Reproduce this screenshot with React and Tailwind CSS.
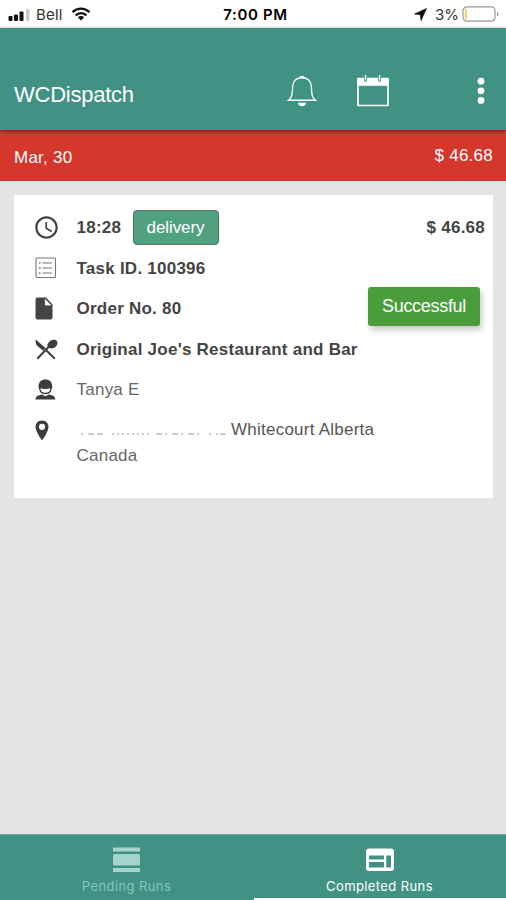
import React from 'react';
import { MdAccessTime } from 'react-icons/md';

const StatusBar = () => (
  <div className="flex h-7 bg-white text-black font-['Inter',sans-serif]">
    <div className="flex-1 flex items-center pl-2 pt-px">
      <svg width="23" height="14" viewBox="0 0 23 14">
        <rect x="0.5" y="8" width="4" height="5" rx="1" fill="#111" />
        <rect x="6" y="6.500" width="4" height="6.500" rx="1" fill="#111" />
        <rect x="11.500" y="3.500" width="4" height="9.500" rx="1" fill="#111" />
        <rect x="18" y="1" width="3.500" height="12" rx="1" fill="#c9c9c9" />
      </svg>
      <span className="ml-[5px] pt-px text-[15px] tracking-[0.2px] text-[#333]">Bell</span>
      <svg className="ml-2 -mt-px" width="20" height="14" viewBox="0 0 20 14" fill="none" stroke="#111" strokeWidth="2.400">
        <path d="M1.500 5.200C6.500 0.400 13.500 0.400 18.500 5.200" />
        <path d="M4.600 8.400C7.800 5.400 12.200 5.400 15.400 8.400" />
        <path d="M10 13.500L6.800 10.300C8.600 8.700 11.400 8.700 13.200 10.300Z" fill="#111" stroke="none" />
      </svg>
    </div>
    <div className="flex items-center text-[15px] font-semibold tracking-[0.65px] pt-[2px] pl-[3px]">7:00 PM</div>
    <div className="flex-1 flex items-center justify-end pr-[6px]">
      <svg width="13" height="13" viewBox="0 0 13 13">
        <path d="M12.500 0.500L7 12.500L6.300 6.700L0.500 6Z" fill="#111" stroke="#111" strokeWidth="0.700" />
      </svg>
      <span className="ml-2 pt-[2px] text-[15px] text-[#333]">3%</span>
      <svg className="ml-[3px]" width="38" height="16" viewBox="0 0 38 16">
        <rect x="1" y="0.800" width="32" height="14.400" rx="4" fill="#fff" stroke="#999" strokeWidth="1.200" />
        <rect x="2.800" y="3" width="2" height="10" rx="1" fill="#f5cf5b" />
        <path d="M35 6C37 6.500 37 9.500 35 10Z" fill="#999" />
      </svg>
    </div>
  </div>
);

const Header = () => (
  <header className="relative z-10 flex items-center h-[102px] pt-[25px] pl-[14px] pr-[21px] bg-[#419285] text-white shadow-[0_1px_4px_rgba(0,0,0,0.55)]">
    <h1 className="flex-1 pt-[6px] text-[22px] tracking-[-0.25px]">WCDispatch</h1>
    <svg className="-mt-[2px] mr-[40px]" width="30" height="32" viewBox="0 0 30 32" fill="none" stroke="#fff" strokeWidth="1.400">
      <path d="M1.500 25.300C4 23.500 5 21 5.300 17L5.700 11C6 6 9.500 2.800 15 2.800S24 6 24.300 11L24.700 17C25 21 26 23.500 28.500 25.300Z" />
      <path d="M12.300 2.700C12.500 0 17.500 0 17.700 2.700Z" fill="#fff" stroke="none" />
      <path d="M10.800 27.800H19.200C18.500 32.300 11.500 32.300 10.800 27.800Z" fill="#fff" stroke="none" />
    </svg>
    <svg className="-mt-[2px] mr-[88px]" width="32" height="32" viewBox="0 0 32 32">
      <path d="M1 3.500H31V30.500H1Z" fill="none" stroke="#fff" strokeWidth="1.700" />
      <path d="M0.500 3H31.500V10.800H0.500Z" fill="#fff" />
      <path d="M8.500 3V6.500M22.500 3V6.500" stroke="#419285" strokeWidth="2.800" />
      <path d="M8.500 0V5.500M22.500 0V5.500" stroke="#fff" strokeWidth="1.300" />
    </svg>
    <svg className="-mt-[2px]" width="8" height="28" viewBox="0 0 8 28" fill="#fff">
      <circle cx="4" cy="4.200" r="3.400" />
      <circle cx="4" cy="13.800" r="3.400" />
      <circle cx="4" cy="23.400" r="3.400" />
    </svg>
  </header>
);

const ListIcon = () => (
  <svg width="22" height="22" viewBox="0 0 22 22" fill="none" stroke="#777">
    <rect x="1" y="1" width="19.500" height="19.500" rx="1" strokeWidth="1.100" />
    <path d="M7.500 6H17M7.500 11H17M7.500 16H17" strokeWidth="1.200" />
    <path d="M4 6H5.600M4 11H5.600M4 16H5.600" strokeWidth="1.600" />
  </svg>
);

const FileIcon = () => (
  <svg width="18" height="23" viewBox="0 0 18 23">
    <path d="M2.500 0.500H11L17.500 7.500V20.500Q17.500 22.500 15.500 22.500H2.500Q0.500 22.500 0.500 20.500V2.500Q0.500 0.500 2.500 0.500Z" fill="#444" />
    <path d="M10.300 2.200V8H16" fill="#fff" stroke="#fff" strokeWidth="0.800" />
  </svg>
);

const CutleryIcon = () => (
  <svg width="23" height="21" viewBox="0 0 23 21" fill="#3d3d3d">
    <path d="M0.800 0.500L10.700 9.200L8.200 11.800L2.500 7C0.800 5.500 0.300 2.800 0.800 0.500Z" />
    <path d="M12.500 5.500C13.500 2.500 16.500 0.300 19.500 0.700C22 1 23 3.200 22.200 5.500C21.300 8.200 18.300 10 15.500 9.200C13.200 8.700 12 7.300 12.500 5.500Z" />
    <path d="M14 7.500L2.300 19.700M10.700 10.800L19.800 19.700" fill="none" stroke="#3d3d3d" strokeWidth="2" />
  </svg>
);

const PersonIcon = () => (
  <svg width="21" height="21" viewBox="0 0 21 21" fill="#3d3d3d">
    <path d="M3.500 8C3.500 2.800 6.300 0.500 10.400 0.500S17.300 2.800 17.300 8L16.300 11.500C15.600 14 13.500 15.300 10.400 15.300S5.200 14 4.500 11.500Z" />
    <path d="M5.300 9.300C8 10.200 12.800 10.200 15.500 9.300C15.200 12.300 13.300 13.800 10.400 13.800S5.600 12.300 5.300 9.300Z" fill="#fff" />
    <path d="M0.500 20.500C0.500 17.500 3 16.300 7 15.600L10.400 17.200L13.800 15.600C17.800 16.300 20.300 17.500 20.300 20.500Z" />
  </svg>
);

const PinIcon = () => (
  <svg width="14" height="21" viewBox="0 0 14 21">
    <path d="M7 0.500C3.200 0.500 0.500 3.300 0.500 7C0.500 11.500 7 20.500 7 20.500S13.500 11.500 13.500 7C13.500 3.300 10.800 0.500 7 0.500Z" fill="#3d3d3d" />
    <circle cx="7" cy="6.800" r="3.100" fill="#fff" />
  </svg>
);

const Row = ({ icon, children }) => (
  <div className="flex items-center h-[40.500px]">
    <div className="w-[41.500px] shrink-0">{icon}</div>
    {children}
  </div>
);

const TaskCard = () => (
  <div className="mt-[14px] ml-[14px] mr-[13px] h-[303px] bg-white pt-[12.500px] pl-[21px] pr-2 text-[17px] tracking-[0.24px] text-[#444]">
    <Row icon={<MdAccessTime className="size-[27px] -ml-[2px] text-[#444]" />}>
      <span className="w-14 font-bold">18:28</span>
      <span className="flex items-center justify-center w-[86px] h-[35px] rounded-[4px] border border-[#5f6f68] bg-[#50a17f] text-white tracking-[-0.1px]">delivery</span>
      <span className="ml-auto font-bold">$ 46.68</span>
    </Row>
    <Row icon={<ListIcon />}>
      <span className="font-bold">Task ID. 100396</span>
    </Row>
    <Row icon={<FileIcon />}>
      <span className="flex-1 font-bold">Order No. 80</span>
      <span className="flex items-center justify-center w-28 h-[39px] mr-[5px] -mt-[5px] rounded-[3px] bg-[#4b9d3b] text-[18px] text-white tracking-[-0.3px] shadow-[2px_4px_6px_rgba(0,0,0,0.22)]">Successful</span>
    </Row>
    <Row icon={<CutleryIcon />}>
      <span className="font-bold">Original Joe's Restaurant and Bar</span>
    </Row>
    <Row icon={<PersonIcon />}>
      <span className="text-[#666]">Tanya E</span>
    </Row>
    <Row icon={<PinIcon />}>
      {/* street is hidden, only faint marks stay */}
      <svg className="mt-[7px] mr-[0.500px]" width="154" height="4" viewBox="0 0 154 4">
        <path d="M4 2H27" stroke="#bbb" strokeWidth="1.500" strokeDasharray="2 5 6 3 6 8" />
        <path d="M35 2H72" stroke="#bbb" strokeWidth="1.500" strokeDasharray="2 3" />
        <path d="M79 2H126" stroke="#bbb" strokeWidth="1.500" strokeDasharray="6 3 2 5" />
        <path d="M132 2H149" stroke="#bbb" strokeWidth="1.500" strokeDasharray="2 5 2 2 6 3" />
      </svg>
      <span className="w-[143px] -mt-[2px] overflow-hidden whitespace-nowrap text-[#555]">Whitecourt Alberta</span>
    </Row>
    <div className="pl-[41.500px] -mt-[8px] text-[#666]">Canada</div>
  </div>
);

const BottomNav = () => (
  <nav className="relative flex h-[66px] bg-[#419285] border-t border-[#6caaa0] text-[13px] tracking-[0.4px] font-['Inter',sans-serif]">
    <div className="flex-1 flex flex-col items-center pt-3">
      <svg width="27" height="26" viewBox="0 0 27 26" fill="#a6d5d0">
        <rect y="0.500" width="27" height="4" />
        <rect y="7" width="27" height="11.500" rx="1.500" />
        <rect y="21" width="27" height="4" />
      </svg>
      <span className="mt-[5px] leading-4 text-[#87c3ba]">Pending Runs</span>
    </div>
    <div className="flex-1 flex flex-col items-center pt-3 text-white">
      <svg width="28" height="26" viewBox="0 0 28 26">
        <rect y="1.500" width="28" height="22.500" rx="3" fill="#fff" />
        <path d="M3 8.500H18V12.500H3ZM3 15H18V20.500H3ZM20.300 8.500H25V20.500H20.300Z" fill="#419285" />
      </svg>
      <span className="mt-[5px] leading-4">Completed Runs</span>
    </div>
    <div className="absolute bottom-0 left-[254px] right-0 h-[2px] bg-white" />
  </nav>
);

export default function App() {
  return (
    <div className="flex flex-col w-[506px] h-[900px] overflow-hidden bg-[#e3e4e6] font-['Liberation_Sans',Arial,sans-serif]">
      <StatusBar />
      <Header />
      <div className="flex justify-between h-[51px] pl-[14px] pr-[13px] pt-[13px] bg-[#d6372d] text-white text-[17px] tracking-[0.250px]">
        <span className="pt-[2px]">Mar, 30</span>
        <span>$ 46.68</span>
      </div>
      <main className="flex-1">
        <TaskCard />
      </main>
      <BottomNav />
    </div>
  );
}
